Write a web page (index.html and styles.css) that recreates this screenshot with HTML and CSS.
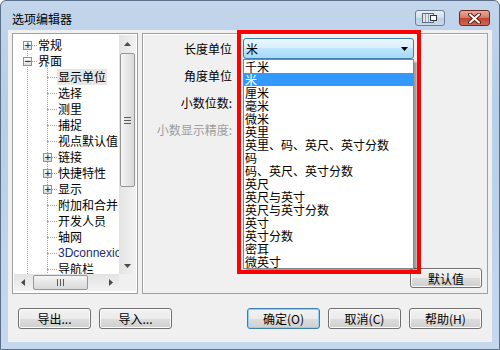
FILE: index.html
```html
<!DOCTYPE html>
<html lang="zh-CN">
<head>
    <meta charset="UTF-8">
    <title>选项编辑器</title>
    <link rel="stylesheet" href="styles.css">
</head>
<body>

<div class="window">
    <div class="titlebar">
        <span class="title">选项编辑器</span>
        <div class="caption">
            <div class="cap-btn cap-help">
                <svg width="16" height="10" viewBox="0 0 16 10">
                    <rect x="0.5" y="0.5" width="11" height="9" fill="#e4e8ee" stroke="#5d6b7c"/>
                    <line x1="3.5" y1="1" x2="3.5" y2="9" stroke="#9aa5b3"/>
                    <line x1="6.5" y1="1" x2="6.5" y2="9" stroke="#9aa5b3"/>
                    <rect x="8.5" y="2.5" width="6" height="5" fill="#fff" stroke="#2d3640"/>
                </svg>
            </div>
            <div class="cap-btn cap-close">
                <svg width="13" height="11" viewBox="0 0 13 11">
                    <path d="M2 1.5 L11 9.5 M11 1.5 L2 9.5" stroke="#5a1d16" stroke-width="4" stroke-linecap="round"/>
                    <path d="M2 1.5 L11 9.5 M11 1.5 L2 9.5" stroke="#fff" stroke-width="2" stroke-linecap="round"/>
                </svg>
            </div>
        </div>
    </div>

    <div class="client">
        <div class="main">
            <!-- tree on the left -->
            <div class="tree-box">
                <div class="tree-top">
                    <div class="tree">
                        <div class="node"><span class="stem"><span class="box">+</span></span><span class="label">常规</span></div>
                        <div class="node"><span class="stem"><span class="box">−</span></span><span class="label">界面</span></div>
                        <div class="children">
                            <div class="node lv2"><span class="stem"></span><span class="label selected">显示单位</span></div>
                            <div class="node lv2"><span class="stem"></span><span class="label">选择</span></div>
                            <div class="node lv2"><span class="stem"></span><span class="label">测里</span></div>
                            <div class="node lv2"><span class="stem"></span><span class="label">捕捉</span></div>
                            <div class="node lv2"><span class="stem"></span><span class="label">视点默认值</span></div>
                            <div class="node lv2"><span class="stem"><span class="box">+</span></span><span class="label">链接</span></div>
                            <div class="node lv2"><span class="stem"><span class="box">+</span></span><span class="label">快捷特性</span></div>
                            <div class="node lv2"><span class="stem"><span class="box">+</span></span><span class="label">显示</span></div>
                            <div class="node lv2"><span class="stem"></span><span class="label">附加和合并</span></div>
                            <div class="node lv2"><span class="stem"></span><span class="label">开发人员</span></div>
                            <div class="node lv2"><span class="stem"></span><span class="label">轴网</span></div>
                            <div class="node lv2"><span class="stem"></span><span class="label latin">3Dconnexion</span></div>
                            <div class="node lv2"><span class="stem"></span><span class="label">导航栏</span></div>
                        </div>
                    </div>
                    <div class="vscroll">
                        <div class="sb-btn">
                            <svg width="7" height="4" viewBox="0 0 7 4"><path d="M0 4 L3.5 0 L7 4 Z" fill="#4a4a4a"/></svg>
                        </div>
                        <div class="sb-track">
                            <div class="thumb v-thumb"><span class="grip-v"></span></div>
                        </div>
                        <div class="sb-btn">
                            <svg width="7" height="4" viewBox="0 0 7 4"><path d="M0 0 L7 0 L3.5 4 Z" fill="#4a4a4a"/></svg>
                        </div>
                    </div>
                </div>
                <div class="tree-bottom">
                    <div class="hscroll">
                        <div class="sb-btn">
                            <svg width="4" height="7" viewBox="0 0 4 7"><path d="M4 0 L4 7 L0 3.5 Z" fill="#4a4a4a"/></svg>
                        </div>
                        <div class="sb-track h-track">
                            <div class="thumb h-thumb"><span class="grip-h"></span></div>
                        </div>
                        <div class="sb-btn">
                            <svg width="4" height="7" viewBox="0 0 4 7"><path d="M0 0 L4 3.5 L0 7 Z" fill="#4a4a4a"/></svg>
                        </div>
                    </div>
                    <div class="corner"></div>
                </div>
            </div>

            <!-- settings on the right -->
            <div class="panel">
                <div class="form">
                    <div class="row">
                        <span class="field-label">长度单位</span>
                        <div class="combo-wrap">
                            <div class="combo">
                                <span>米</span>
                                <svg width="7" height="4" viewBox="0 0 7 4"><path d="M0 0 L7 0 L3.5 4 Z" fill="#000"/></svg>
                            </div>
                            <ul class="droplist">
                                <li>千米</li>
                                <li class="active">米</li>
                                <li>厘米</li>
                                <li>毫米</li>
                                <li>微米</li>
                                <li>英里</li>
                                <li>英里、码、英尺、英寸分数</li>
                                <li>码</li>
                                <li>码、英尺、英寸分数</li>
                                <li>英尺</li>
                                <li>英尺与英寸</li>
                                <li>英尺与英寸分数</li>
                                <li>英寸</li>
                                <li>英寸分数</li>
                                <li>密耳</li>
                                <li>微英寸</li>
                            </ul>
                            <div class="mark"></div>
                        </div>
                    </div>
                    <div class="row"><span class="field-label">角度单位</span></div>
                    <div class="row"><span class="field-label">小数位数:</span></div>
                    <div class="row"><span class="field-label dim">小数显示精度:</span></div>
                </div>
                <div class="panel-foot">
                    <button class="btn btn-small">默认值</button>
                </div>
            </div>
        </div>

        <div class="footer">
            <div class="btn-group">
                <button class="btn">导出...</button>
                <button class="btn">导入...</button>
            </div>
            <div class="btn-group">
                <button class="btn btn-default">确定(O)</button>
                <button class="btn">取消(C)</button>
                <button class="btn">帮助(H)</button>
            </div>
        </div>
    </div>
</div>

</body>
</html>
```

FILE: styles.css
```css
body { margin: 0; font-family: "Noto Sans CJK SC", "Liberation Sans", sans-serif; font-size: 12px; color: #000; }

.window {
    width: 500px;
    height: 350px;
    box-sizing: border-box;
    border: 1px solid #5b6f88;
    border-radius: 6px 6px 0 0;
    background: linear-gradient(to bottom, #c2d5eb, #b7cee8 30%, #c5d8ee 100%);
    padding: 0 7px 7px 7px;
    display: flex;
    flex-direction: column;
}

/* title bar */
.titlebar { height: 29px; display: flex; justify-content: space-between; align-items: flex-start; padding-top: 9px; box-sizing: border-box; }
.title { line-height: 18px; padding-left: 4px; }
.caption { display: flex; gap: 14px; margin-right: 2px; }
.cap-btn {
    height: 16px;
    box-sizing: border-box;
    border: 1px solid #6d7f96;
    border-radius: 3px;
    display: flex;
    align-items: center;
    justify-content: center;
}
.cap-help { width: 30px; background: linear-gradient(to bottom, #e9eff6, #d2deec 50%, #bfcfe2 51%, #cbd9ea); }
.cap-close { width: 31px; border-color: #6b2a22; background: linear-gradient(to bottom, #e9a99c, #d47867 50%, #c2432f 51%, #cf6a55); }

/* client area */
.client { flex: 1; background: #f0f0f0; display: flex; flex-direction: column; }
.main { display: flex; gap: 4px; padding: 3px 4px 0 4px; height: 264px; box-sizing: border-box; }

/* tree */
.tree-box {
    width: 126px;
    box-sizing: border-box;
    border: 1px solid #a0a0a0;
    padding: 1px;
    background: #fff;
    display: flex;
    flex-direction: column;
}
.tree-top { display: flex; height: 239px; }
.tree { flex: 1; position: relative; overflow: hidden; padding-top: 2px; white-space: nowrap; }
.tree::before { content: ""; position: absolute; left: 13px; top: 10px; bottom: 0; border-left: 1px dotted #a0a0a0; }
.children { position: relative; }
.children::before { content: ""; position: absolute; left: 33px; top: -4px; bottom: 0; border-left: 1px dotted #a0a0a0; }
.node { display: flex; align-items: center; height: 16px; padding-left: 4px; position: relative; }
.node.lv2 { padding-left: 24px; }
.stem { width: 19px; height: 16px; position: relative; flex: none; }
.stem::after { content: ""; position: absolute; left: 9px; right: 0; top: 8px; border-top: 1px dotted #a0a0a0; }
.box {
    position: absolute;
    left: 5px;
    top: 4px;
    width: 9px;
    height: 9px;
    box-sizing: border-box;
    border: 1px solid #919191;
    background: linear-gradient(to bottom, #fff, #dcdcdc);
    z-index: 1;
    font-family: "DejaVu Sans", sans-serif;
    font-size: 9px;
    line-height: 6px;
    text-align: center;
    color: #2e3a4a;
    font-weight: bold;
}
.label { line-height: 16px; padding: 0 1px; }
.label.selected { background: #e6e6e6; }
.label.latin { font-family: "Liberation Sans", sans-serif; color: #1e2a70; }

/* scrollbars */
.vscroll { width: 17px; display: flex; flex-direction: column; background: linear-gradient(to right, #e3e3e3, #f2f2f2); }
.sb-btn { width: 17px; height: 17px; flex: none; display: flex; align-items: center; justify-content: center; }
.sb-track { flex: 1; position: relative; }
.thumb {
    box-sizing: border-box;
    border: 1px solid #979797;
    border-radius: 2px;
    display: flex;
    align-items: center;
    justify-content: center;
}
.v-thumb { margin: 1px 0 0 1px; width: 15px; height: 134px; background: linear-gradient(to right, #f5f5f5, #e6e6e6 50%, #d9d9d9); }
.grip-v { width: 7px; height: 5px; border-top: 1px solid #5a5a5a; border-bottom: 1px solid #5a5a5a; position: relative; }
.grip-v::after { content: ""; position: absolute; left: 0; right: 0; top: 2px; border-top: 1px solid #5a5a5a; }

.tree-bottom { display: flex; height: 17px; }
.hscroll { flex: 1; display: flex; background: linear-gradient(to bottom, #e3e3e3, #f2f2f2); }
.h-track { display: flex; align-items: center; }
.h-thumb { margin-left: 2px; width: 55px; height: 15px; background: linear-gradient(to bottom, #f5f5f5, #e6e6e6 50%, #d9d9d9); }
.grip-h { width: 5px; height: 7px; border-left: 1px solid #5a5a5a; border-right: 1px solid #5a5a5a; position: relative; }
.grip-h::after { content: ""; position: absolute; top: 0; bottom: 0; left: 2px; border-left: 1px solid #5a5a5a; }
.corner { width: 17px; background: #f0f0f0; }

/* right panel */
.panel {
    width: 346px;
    box-sizing: border-box;
    border: 1px solid #a0a0a0;
    box-shadow: inset 1px 1px 0 #fff;
    display: flex;
    flex-direction: column;
}
.form { padding-top: 4px; display: flex; flex-direction: column; gap: 6px; }
.row { display: flex; align-items: center; height: 21px; gap: 11px; }
.field-label { width: 89px; text-align: right; line-height: 16px; flex: none; }
.field-label.dim { color: #9d9d9d; }

.combo-wrap { position: relative; }
.combo {
    width: 171px;
    height: 21px;
    box-sizing: border-box;
    border: 1px solid #3c7fb1;
    border-radius: 3px;
    background: linear-gradient(to bottom, #eaf6fd, #d9f0fc 45%, #bee6fd 50%, #a7d9f5);
    display: flex;
    align-items: center;
    justify-content: space-between;
    padding: 0 5px 0 2px;
}
.droplist {
    position: absolute;
    top: 21px;
    left: 0;
    width: 171px;
    margin: 0;
    padding: 0;
    list-style: none;
    box-sizing: border-box;
    border: 1px solid #828790;
    background: #fff;
    box-shadow: 3px 3px 2px rgba(0, 0, 0, 0.35);
    z-index: 2;
}
.droplist li { height: 13px; line-height: 13px; padding-left: 1px; white-space: nowrap; overflow: hidden; }
.droplist li.active { background: #3399ff; color: #fff; }
.mark {
    position: absolute;
    left: -6px;
    top: -8px;
    width: 184px;
    height: 244px;
    box-sizing: border-box;
    border: 4px solid #ff0000;
    z-index: 3;
}

.panel-foot { margin-top: auto; display: flex; justify-content: flex-end; padding: 0 5px 5px 0; }

/* buttons */
.btn {
    width: 73px;
    height: 21px;
    box-sizing: border-box;
    border: 1px solid #707070;
    border-radius: 3px;
    background: linear-gradient(to bottom, #f2f2f2, #ebebeb 50%, #dddddd 51%, #cfcfcf);
    box-shadow: inset 0 0 0 1px #fbfbfb;
    font-family: inherit;
    font-size: 12px;
    color: #000;
    padding: 0;
    line-height: 17px;
}
.btn-small { width: 72px; height: 20px; }
.btn-default { border-color: #3c7fb1; box-shadow: inset 0 0 0 1px #8fd0f5; }

.footer { display: flex; justify-content: space-between; padding: 14px 10px 0 10px; }
.btn-group { display: flex; gap: 8px; }
```
